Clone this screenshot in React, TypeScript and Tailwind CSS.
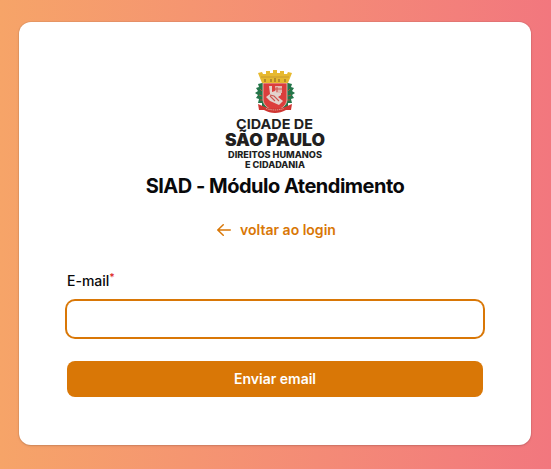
function Crest() {
  return (
    <svg viewBox="0 0 40 46" className="h-[46px] w-[40px] shrink-0" aria-hidden="true">
      <path d="M7 14l-4 1 1 3-3 1 2 3-3 2 3 2-2 3 3 1-1 4 4 0 0 4 9 2V14z" fill="#25764a" />
      <path d="M33 14l4 1-1 3 3 1-2 3 3 2-3 2 2 3-3 1 1 4-4 0 0 4-9 2V14z" fill="#25764a" />
      <path d="M5 20l2 2M4 26l3 1M35 20l-2 2M36 26l-3 1M5 31l3 0M35 31l-3 0" stroke="#a8573f" strokeWidth="1" />
      <path d="M8 14h24v16c0 6-5 10-12 12C13 40 8 36 8 30z" fill="#dc3e3c" stroke="#ecccc0" strokeWidth=".8" />
      <path d="M14 17h3v6l3-1 3-4 3 1v7l-3 2 5 4-4 4-9-4-4-4 4-3z" fill="#e3d3cd" />
      <path d="M20 17h7v7h-6z" fill="#e3b9b1" />
      <path d="M22 18v5m-2-3h7m-12 6l4 1 5 5m-9-5l5 5" fill="none" stroke="#cc5650" strokeWidth="1.1" />
      <path d="M3 35l7 3c7 2 13 2 20 0l7-3-1 6-5 0c-7 4-15 4-22 0l-5 0z" fill="#cf3632" />
      <path d="M11 39.5c6 2 12 2 18 0" fill="none" stroke="#e29c90" strokeWidth="1" strokeDasharray="1.5 .7" />
      <path d="M3 4l4-1 1 2 3 0V2h4v2h3V1h4v3h3V2h4v3l3 0 1-2 4 1-4 10H7z" fill="#e7b92f" />
      <path d="M6 8h28" stroke="#c29331" strokeWidth=".8" />
      <path d="M10 10v3m6-3v3m8-3v3m6-3v3M20 9v4" stroke="#997029" strokeWidth="1.3" />
    </svg>
  );
}

function Brand() {
  return (
    <div className="flex h-[100px] flex-col items-center">
      <Crest />
      <svg viewBox="0 0 102 54" className="h-[54px] w-[102px]" fill="#221f1f" fontFamily="Inter, sans-serif">
        <text x="12" y="13.8" fontSize="13.8" fontWeight="700" textLength="77" lengthAdjust="spacingAndGlyphs">CIDADE DE</text>
        <text x="1" y="31.2" fontSize="17" fontWeight="900" textLength="100" lengthAdjust="spacingAndGlyphs">SÃO PAULO</text>
        <text x="4" y="43.4" fontSize="8.7" fontWeight="800" textLength="94" lengthAdjust="spacingAndGlyphs">DIREITOS HUMANOS</text>
        <text x="21" y="52.6" fontSize="8.4" fontWeight="800" textLength="60" lengthAdjust="spacingAndGlyphs">E CIDADANIA</text>
      </svg>
    </div>
  );
}

export default function App() {
  return (
    <div className="h-[469px] w-full bg-linear-to-r from-[#f6a468] to-[#f2777e] pt-[22px] pl-[19px] font-['Inter',sans-serif]">
      <main className="flex h-[423px] w-[512px] flex-col rounded-xl bg-white px-12 pt-[47px] shadow-sm ring-1 ring-gray-950/5">
        <Brand />
        <h1 className="mt-[1px] text-center text-xl leading-8 font-bold tracking-tight text-[#09090b]">SIAD - Módulo Atendimento</h1>
        <a href="#" className="mt-4 flex items-center justify-center gap-1.5 text-sm leading-6 font-semibold text-[#d97706]">
          <svg viewBox="0 0 20 20" className="size-5" fill="currentColor" aria-hidden="true">
            <path fillRule="evenodd" clipRule="evenodd" d="M17 10a.75.75 0 0 1-.75.75H5.612l4.158 3.96a.75.75 0 1 1-1.04 1.08l-5.5-5.25a.75.75 0 0 1 0-1.08l5.5-5.25a.75.75 0 1 1 1.04 1.08L5.612 9.25H16.25A.75.75 0 0 1 17 10Z" />
          </svg>
          voltar ao login
        </a>
        <form className="mt-[27px] flex flex-col">
          <label htmlFor="email" className="text-sm leading-6 font-medium text-[#09090b]">
            E-mail<sup className="font-medium text-[#dc2626]">*</sup>
          </label>
          <input id="email" type="email" className="mt-2 h-9 w-full rounded-lg bg-white px-3 text-base ring-2 ring-[#d97706] outline-none" />
          <button type="button" className="mt-6 h-9 rounded-lg bg-[#d97706] text-sm font-semibold text-white">Enviar email</button>
        </form>
      </main>
    </div>
  );
}
